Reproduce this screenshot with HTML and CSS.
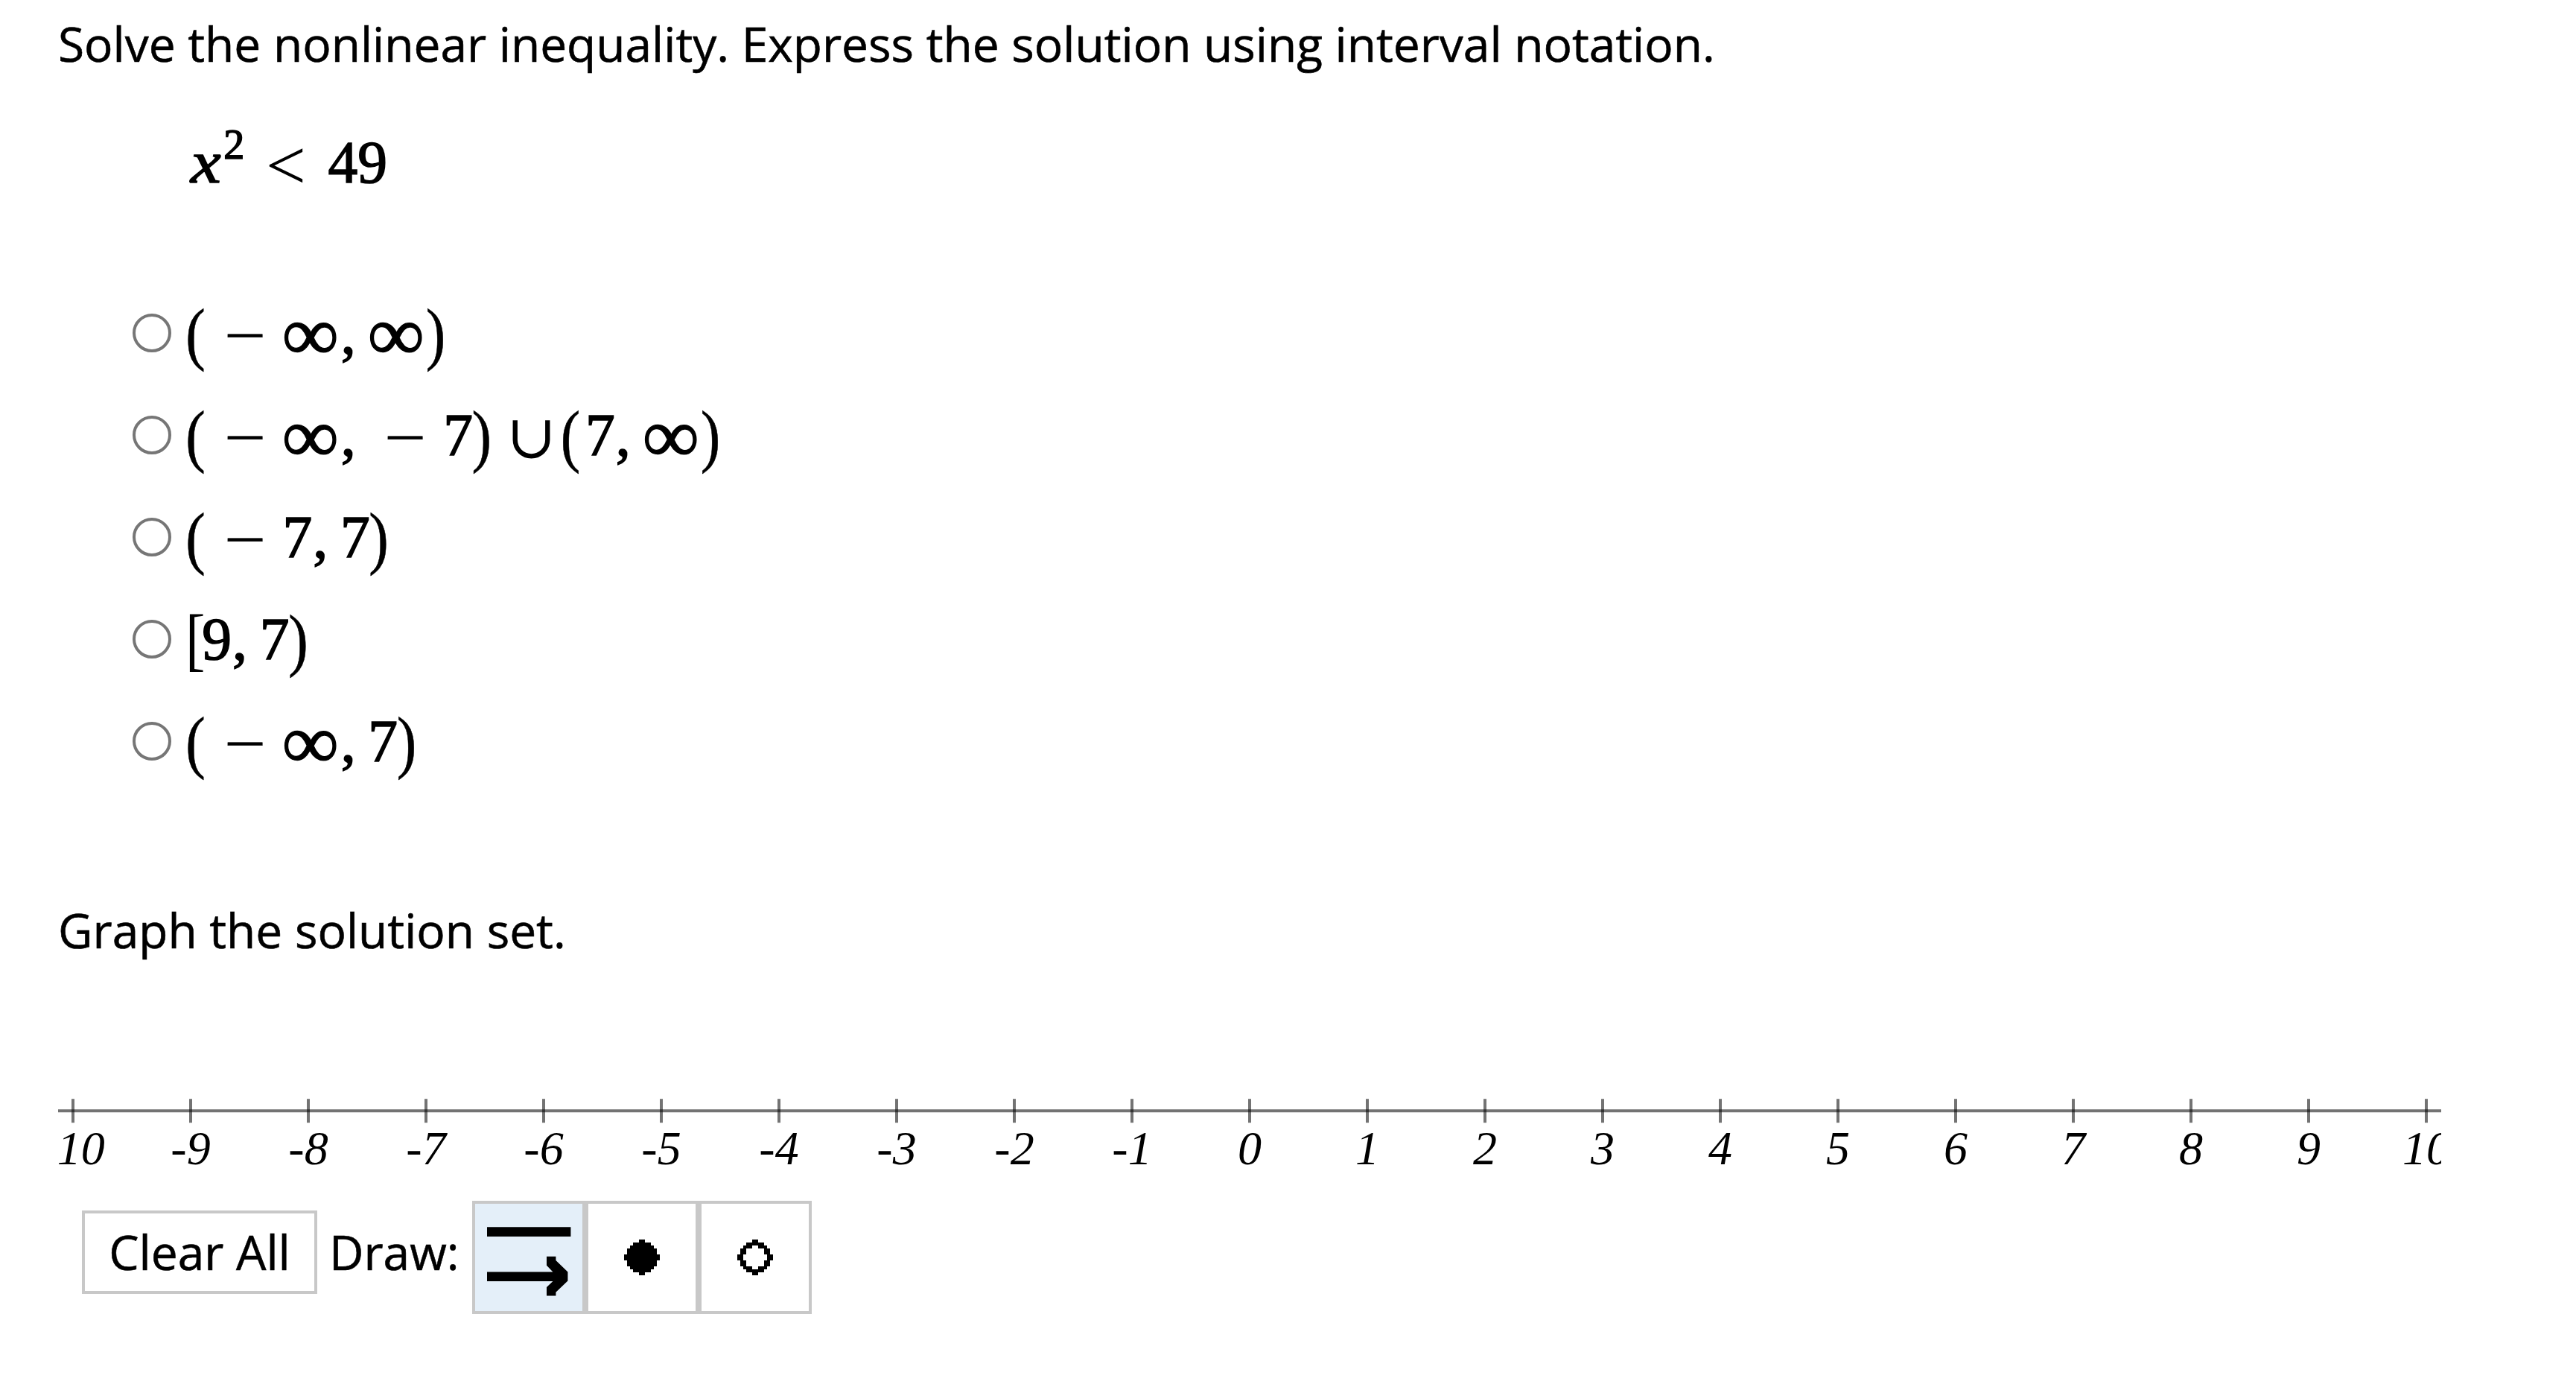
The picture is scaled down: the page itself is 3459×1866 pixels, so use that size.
FILE: index.html
```html
<!DOCTYPE html>
<html lang="en">
<head>
    <meta charset="UTF-8">
    <meta name="viewport" content="width=device-width, initial-scale=1.0">
    <title>Nonlinear Inequality</title>
    <link rel="stylesheet" href="styles.css">
</head>
<body>
    <div class="question">
        <p class="prompt">Solve the nonlinear inequality. Express the solution using interval notation.</p>

        <div class="math equation"><i class="var">x</i><sup class="power">2</sup><span class="less">&lt;</span><span class="num">49</span></div>

        <div class="choices">
            <label class="choice">
                <input type="radio" name="interval" value="0">
                <span class="math"><span class="paren">(</span><span class="minus">−</span><span class="inf">∞</span><span class="comma">,</span><span class="inf">∞</span><span class="paren">)</span></span>
            </label>
            <label class="choice">
                <input type="radio" name="interval" value="1">
                <span class="math"><span class="paren">(</span><span class="minus">−</span><span class="inf">∞</span><span class="comma">,</span><span class="minus">−</span><span class="num">7</span><span class="paren">)</span><span class="union">∪</span><span class="paren">(</span><span class="num">7</span><span class="comma">,</span><span class="inf">∞</span><span class="paren">)</span></span>
            </label>
            <label class="choice">
                <input type="radio" name="interval" value="2">
                <span class="math"><span class="paren">(</span><span class="minus">−</span><span class="num">7</span><span class="comma">,</span><span class="num">7</span><span class="paren">)</span></span>
            </label>
            <label class="choice">
                <input type="radio" name="interval" value="3">
                <span class="math"><span class="bracket">[</span><span class="num">9</span><span class="comma">,</span><span class="num">7</span><span class="paren">)</span></span>
            </label>
            <label class="choice">
                <input type="radio" name="interval" value="4">
                <span class="math"><span class="paren">(</span><span class="minus">−</span><span class="inf">∞</span><span class="comma">,</span><span class="num">7</span><span class="paren">)</span></span>
            </label>
        </div>

        <p class="prompt">Graph the solution set.</p>

        <svg class="number-line" id="numberLine" viewBox="0 0 800 50">
            <line x1="0" y1="23.3" x2="800" y2="23.3"></line>
        </svg>

        <div class="toolbar">
            <button class="clear" type="button">Clear All</button>
            <span class="draw-label">Draw:</span>
            <div class="tools">
                <button class="tool selected" type="button" aria-label="Line and ray">
                    <svg viewBox="0 0 36 36">
                        <path d="M4 7.8h28.1v3.2H4z"></path>
                        <path d="M4 22.9h22.1L24 20.7v-3h3.1V19l4 3.9v3l-4 3.8v1.2H24V28l2.1-2H4z"></path>
                    </svg>
                </button>
                <button class="tool" type="button" aria-label="Closed dot">
                    <svg viewBox="0 0 36 36">
                        <path d="M17 12h2v1h2v1h1v1h1v2h1v2h-1v2h-1v1h-1v1h-2v1h-2v-1h-2v-1h-1v-1h-1v-2h-1v-2h1v-2h1v-1h1v-1h2z"></path>
                    </svg>
                </button>
                <button class="tool" type="button" aria-label="Open dot">
                    <svg viewBox="0 0 36 36">
                        <path fill-rule="evenodd" d="M17 12h2v1h2v1h1v1h1v2h1v2h-1v2h-1v1h-1v1h-2v1h-2v-1h-2v-1h-1v-1h-1v-2h-1v-2h1v-2h1v-1h1v-1h2zM17 14h2v1h2v2h1v2h-1v2h-2v1h-2v-1h-2v-2h-1v-2h1v-2h2z"></path>
                    </svg>
                </button>
            </div>
        </div>
    </div>

    <script>
        const svg = document.getElementById('numberLine');

        function add(tag, attrs, text) {
            const el = document.createElementNS('http://www.w3.org/2000/svg', tag);
            for (const name in attrs) {
                el.setAttribute(name, attrs[name]);
            }
            if (text !== undefined) {
                el.textContent = text;
            }
            svg.appendChild(el);
        }

        for (let n = -10; n <= 10; n++) {
            const x = 400 + n * 39.5;
            add('line', { x1: x, y1: 19.3, x2: x, y2: 27.3 });
            add('text', { x: x, y: 41.3 }, n);
        }
    </script>
</body>
</html>
```

FILE: styles.css
```css
body {
    margin: 0;
    background: #fff;
    color: #000;
    font-family: "Open Sans", "Noto Sans", sans-serif;
    font-size: 64px;
    -webkit-text-stroke: 0.6px #000;
}
.question {
    width: 3200px;
    padding: 14px 0 0 78px;
}
.prompt {
    margin: 0;
    line-height: 90px;
    white-space: nowrap;
}
.math {
    font-family: "Liberation Serif", serif;
    font-size: 79.5px;
    line-height: 100px;
    white-space: nowrap;
    -webkit-text-stroke: 1.6px #000;
}
.math span {
    display: inline-block;
    text-align: center;
}
.equation {
    height: 100px;
    margin: 64px 0 0 181px;
}
.var {
    display: inline-block;
    width: 0.52em;
    transform: scaleX(1.15);
}
.power {
    font-size: 56px;
    line-height: 0;
    vertical-align: 32px;
}
.math .less {
    width: 0.78em;
    margin: 0 0.29em 0 0.31em;
    transform: translateY(4px) scale(1.2);
    -webkit-text-stroke: 0;
}
.math .num {
    padding-left: 0.03em;
}
.math .paren {
    width: 0.389em;
    transform: translateX(-2px) scaleY(1.17);
    -webkit-text-stroke: 0.5px #000;
}
.math .num + .paren {
    margin-left: -0.02em;
}
.math .bracket {
    width: 0.25em;
    transform: scaleY(1.17);
    -webkit-text-stroke: 0;
}
.math .minus {
    width: 0.778em;
    margin: 0 0.222em;
    transform: translateY(3px) scaleX(1.25);
    -webkit-text-stroke: 0.5px #000;
}
.math .comma + .minus {
    margin-left: 0.27em;
}
.math .inf {
    width: 1em;
    transform: translateY(1px) scale(1.35, 1.3);
    -webkit-text-stroke: 1px #000;
}
.math .comma {
    width: 0.278em;
    margin-right: 0.167em;
}
.math .union {
    width: 0.667em;
    margin: 0 0.222em;
    font-family: "DejaVu Math TeX Gyre", "DejaVu Sans", sans-serif;
    line-height: 0;
    -webkit-text-stroke: 0;
}
.choices {
    margin: 129px 0 122px 100px;
}
.choice {
    display: flex;
    height: 137px;
}
.choice input {
    appearance: none;
    width: 52px;
    height: 52px;
    margin: 24px 19px 0 0;
    border: 4px solid #767676;
    border-radius: 50%;
    box-sizing: border-box;
}
.number-line {
    display: block;
    width: 3200px;
    height: 200px;
    margin-top: 104px;
    overflow: hidden;
}
.number-line line {
    stroke: #000;
    stroke-opacity: 0.55;
}
.number-line text {
    font-family: "Liberation Serif", serif;
    font-style: italic;
    font-size: 16px;
    text-anchor: middle;
    -webkit-text-stroke: 0.25px #000;
}
.toolbar {
    display: flex;
    margin: 14px 0 0 32px;
}
.clear {
    width: 316px;
    height: 112px;
    margin: 13px 16px 0 0;
    padding: 0;
    border: 4px solid #c8c8c8;
    background: #fff;
    color: #000;
    font: inherit;
    line-height: 100px;
}
.draw-label {
    width: 192px;
    margin-top: 13px;
    line-height: 112px;
}
.tools {
    display: flex;
}
.tool {
    width: 152px;
    height: 152px;
    padding: 0;
    border: 4px solid #c8c8c8;
    background: #fff;
}
.tool svg {
    display: block;
    width: 144px;
    height: 144px;
}
.selected {
    background: #e4eff9;
}
```
